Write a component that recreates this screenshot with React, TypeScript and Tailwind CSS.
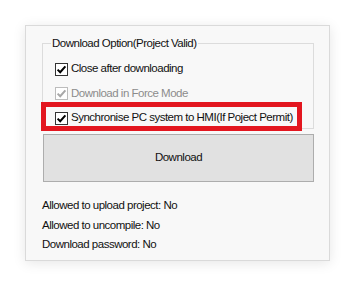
import React from "react";

function Check({ disabled }: { disabled?: boolean }) {
  return (
    <span
      className={
        "flex h-[13px] w-[13px] shrink-0 items-center justify-center border bg-white " +
        (disabled ? "border-[#bcbcbc]" : "border-[#333333]")
      }
    >
      <svg width="11" height="11" viewBox="0 0 11 11">
        <path
          d="M1.6 5.6 L4.2 8.2 L9.4 2.4"
          fill="none"
          stroke={disabled ? "#a8a8a8" : "#000000"}
          strokeWidth="2"
        />
      </svg>
    </span>
  );
}

function Row({ label, disabled }: { label: string; disabled?: boolean }) {
  return (
    <div className="flex h-[20px] items-center gap-[3px]">
      <Check disabled={disabled} />
      <span className={"whitespace-nowrap " + (disabled ? "text-[#8c8c8c]" : "text-[#111111]")}>{label}</span>
    </div>
  );
}

export default function App() {
  return (
    <div
      className="relative h-[286px] w-[355px] overflow-hidden bg-white pl-[25px] pt-[25px] text-[11.5px] tracking-[-0.5px] text-[#111111]"
      style={{ fontFamily: '"Liberation Sans", Arial, sans-serif' }}
    >
      <div className="h-[236px] w-[305px] border border-[#dadada] bg-[#f8f8f8] px-[16px] pt-[17px] shadow-[0_2px_12px_rgba(0,0,0,0.10)]">
        <div className="relative h-[86px] w-[272px] border border-[#dcdcdc] pl-[12px] pt-[15px]">
          <div className="absolute -top-[9px] left-[8px] whitespace-nowrap bg-[#f8f8f8] px-[1px] leading-[16px] text-[#111111]">
            Download Option(Project Valid)
          </div>
          <div className="flex flex-col gap-[4.5px]">
            <Row label="Close after downloading" />
            <Row label="Download in Force Mode" disabled />
            <Row label="Synchronise PC system to HMI(If Poject Permit)" />
          </div>
        </div>
        <button className="ml-[1px] mt-[5px] flex h-[48px] w-[271px] items-center justify-center border border-[#adadad] bg-[#e1e1e1] text-[11.5px] tracking-[-0.5px] text-[#111111]">
          Download
        </button>
        <div className="mt-[14px] flex flex-col leading-[19.5px]">
          <div>Allowed to upload project: No</div>
          <div>Allowed to uncompile: No</div>
          <div>Download password: No</div>
        </div>
      </div>
      <div className="absolute left-[41px] top-[102px] h-[29px] w-[261px] border-[5px] border-[#e3161f]" />
    </div>
  );
}
